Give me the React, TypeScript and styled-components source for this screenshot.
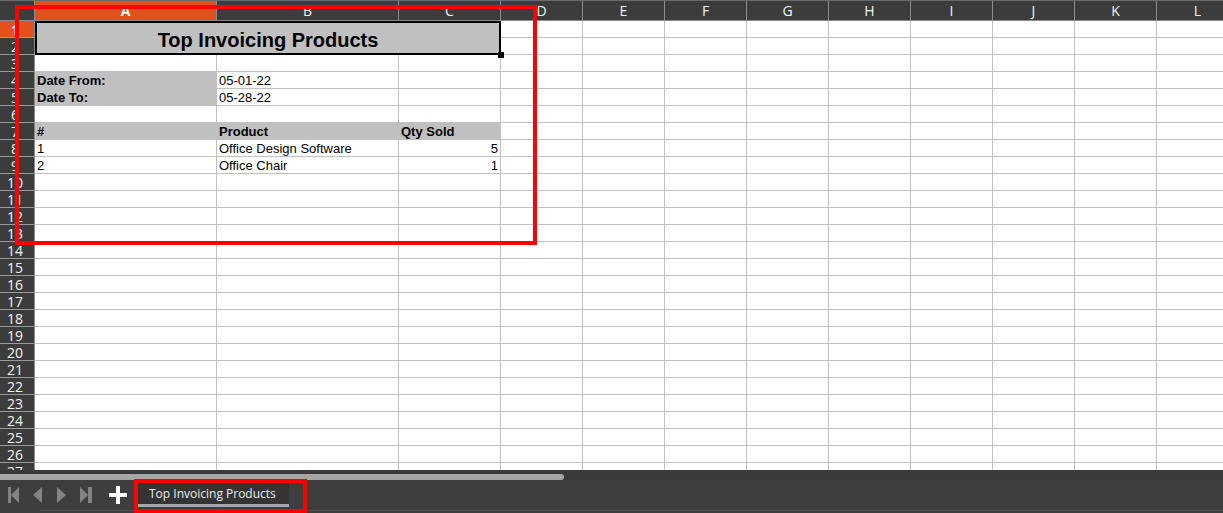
import React from 'react';
import styled, { createGlobalStyle } from 'styled-components';

const GlobalStyle = createGlobalStyle`
  html, body {
    margin: 0;
    padding: 0;
    background: #3c3c3c;
    overflow: hidden;
  }
  * { box-sizing: border-box; }
`;

const COLUMNS = ['A', 'B', 'C', 'D', 'E', 'F', 'G', 'H', 'I', 'J', 'K', 'L'];
const COL_WIDTHS = [182, 182, 102, 82, 82, 82, 82, 82, 82, 82, 82, 82];
const ROW_COUNT = 27;

type CellData = { text: string; bold?: boolean; fill?: boolean; align?: 'left' | 'right' };

const DATA: Record<string, CellData> = {
  A4: { text: 'Date From:', bold: true, fill: true },
  B4: { text: '05-01-22' },
  A5: { text: 'Date To:', bold: true, fill: true },
  B5: { text: '05-28-22' },
  A7: { text: '#', bold: true, fill: true },
  B7: { text: 'Product', bold: true, fill: true },
  C7: { text: 'Qty Sold', bold: true, fill: true },
  A8: { text: '1' },
  B8: { text: 'Office Design Software' },
  C8: { text: '5', align: 'right' },
  A9: { text: '2' },
  B9: { text: 'Office Chair' },
  C9: { text: '1', align: 'right' },
};

const Window = styled.div`
  width: 1223px;
  height: 513px;
  display: flex;
  flex-direction: column;
  background: #3c3c3c;
  position: relative;
  overflow: hidden;
`;

const SheetArea = styled.div`
  height: 470px;
  overflow: hidden;
  background: #ffffff;
`;

const Grid = styled.div`
  display: grid;
  grid-template-columns: 35px ${COL_WIDTHS.map((w) => `${w}px`).join(' ')};
  grid-template-rows: 21px repeat(${ROW_COUNT}, 17px);
`;

const Corner = styled.div`
  background: #3c3c3c;
  border-right: 1px solid #8c8c8c;
  border-bottom: 1px solid #8c8c8c;
  border-top: 1px solid #6a6a6a;
`;

const ColHeader = styled.div<{ $active?: boolean }>`
  background: ${({ $active }) => ($active ? '#e2501c' : '#3c3c3c')};
  color: #f4f4f4;
  border-top: 1px solid #6a6a6a;
  border-right: 1px solid #8c8c8c;
  border-bottom: 1px solid #8c8c8c;
  font-family: 'Open Sans', 'Noto Sans', sans-serif;
  font-size: 14px;
  font-weight: ${({ $active }) => ($active ? 700 : 400)};
  line-height: 19px;
  text-align: center;
`;

const RowHeader = styled.div<{ $active?: boolean }>`
  background: ${({ $active }) => ($active ? '#e2501c' : '#3c3c3c')};
  color: #f4f4f4;
  border-right: 1px solid #8c8c8c;
  border-bottom: 1px solid #9a9a9a;
  font-family: 'Open Sans', 'Noto Sans', sans-serif;
  font-size: 14px;
  font-weight: ${({ $active }) => ($active ? 700 : 400)};
  line-height: 17px;
  text-align: center;
  padding-right: 4px;
`;

const Cell = styled.div<{ $bold?: boolean; $fill?: boolean; $align?: 'left' | 'right' }>`
  background: ${({ $fill }) => ($fill ? '#c0c0c0' : '#ffffff')};
  border-right: 1px solid #c0c0c0;
  border-bottom: 1px solid #c0c0c0;
  font-family: 'Liberation Sans', Arial, sans-serif;
  font-size: 13px;
  font-weight: ${({ $bold }) => ($bold ? 700 : 400)};
  line-height: 16px;
  color: #000000;
  padding: 1px 2px 0;
  text-align: ${({ $align }) => $align ?? 'left'};
  white-space: nowrap;
`;

const TitleCell = styled.div`
  grid-column: 2 / 5;
  grid-row: 2 / 4;
  position: relative;
  background: #c0c0c0;
  border: 2px solid #000000;
  display: flex;
  align-items: center;
  justify-content: center;
  font-family: 'Liberation Sans', Arial, sans-serif;
  font-size: 20px;
  font-weight: 700;
  color: #000000;
  padding-top: 5px;
`;

const FillHandle = styled.span`
  position: absolute;
  right: -5px;
  bottom: -5px;
  width: 6px;
  height: 6px;
  background: #000000;
`;

const ScrollStrip = styled.div`
  height: 10px;
  padding-top: 4px;
  background: #3a3a3a;
`;

const ScrollThumb = styled.div`
  width: 564px;
  height: 6px;
  background: #a6a6a6;
  border-radius: 0 3px 3px 0;
`;

const TabBar = styled.div`
  flex: 1;
  display: flex;
  align-items: flex-start;
  padding-top: 3px;
  background: #3e3e3e;
  position: relative;

  &::after {
    content: '';
    position: absolute;
    left: 40px;
    right: 0;
    bottom: 2px;
    height: 1px;
    background: #4c4c4c;
  }
`;

const NavGroup = styled.div`
  display: flex;
  align-items: center;
  height: 24px;
  padding-left: 8px;
`;

const NavButton = styled.span`
  display: flex;
  width: 24px;
  height: 16px;
  align-items: center;
`;

const AddButton = styled.span`
  display: flex;
  width: 18px;
  height: 18px;
  margin-left: 5px;
  margin-top: 3px;
`;

const Tab = styled.div`
  margin-left: 10px;
  width: 152px;
  height: 24px;
  background: #343434;
  border-bottom: 3px solid #a8a8a8;
  color: #ececec;
  font-family: 'Open Sans', 'Noto Sans', sans-serif;
  font-size: 12px;
  line-height: 21px;
  padding-left: 12px;
  white-space: nowrap;
  position: relative;
  z-index: 1;
`;

const Annotation = styled.div<{ $left: number; $top: number; $w: number; $h: number }>`
  position: absolute;
  left: ${({ $left }) => $left}px;
  top: ${({ $top }) => $top}px;
  width: ${({ $w }) => $w}px;
  height: ${({ $h }) => $h}px;
  border: 4px solid #ff0000;
  pointer-events: none;
  z-index: 5;
`;

const NAV_GRAY = '#838383';

const FirstIcon = () => (
  <svg width="14" height="16" viewBox="0 0 14 16">
    <rect x="0" y="0" width="3" height="16" fill={NAV_GRAY} />
    <polygon points="11,0 11,16 3,8" fill={NAV_GRAY} />
  </svg>
);

const PrevIcon = () => (
  <svg width="12" height="16" viewBox="0 0 12 16">
    <polygon points="10,0 10,16 1,8" fill={NAV_GRAY} />
  </svg>
);

const NextIcon = () => (
  <svg width="12" height="16" viewBox="0 0 12 16">
    <polygon points="1,0 1,16 10,8" fill={NAV_GRAY} />
  </svg>
);

const LastIcon = () => (
  <svg width="14" height="16" viewBox="0 0 14 16">
    <polygon points="0,0 0,16 8,8" fill={NAV_GRAY} />
    <rect x="8" y="0" width="4" height="16" fill={NAV_GRAY} />
  </svg>
);

const PlusIcon = () => (
  <svg width="18" height="18" viewBox="0 0 18 18">
    <rect x="7" y="0" width="4" height="18" fill="#ffffff" />
    <rect x="0" y="7" width="18" height="4" fill="#ffffff" />
  </svg>
);

const App = () => {
  const rows = Array.from({ length: ROW_COUNT }, (_, i) => i + 1);

  return (
    <Window>
      <GlobalStyle />
      <SheetArea>
        <Grid>
          <Corner />
          {COLUMNS.map((c) => (
            <ColHeader key={c} $active={c === 'A'}>
              {c}
            </ColHeader>
          ))}
          <TitleCell>
            Top Invoicing Products
            <FillHandle />
          </TitleCell>
          {rows.map((r) => (
            <React.Fragment key={r}>
              <RowHeader $active={r === 1}>{r}</RowHeader>
              {COLUMNS.map((c, ci) => {
                if (r <= 2 && ci < 3) return null;
                const d = DATA[`${c}${r}`];
                return (
                  <Cell key={c} $bold={d?.bold} $fill={d?.fill} $align={d?.align}>
                    {d?.text}
                  </Cell>
                );
              })}
            </React.Fragment>
          ))}
        </Grid>
      </SheetArea>
      <ScrollStrip>
        <ScrollThumb />
      </ScrollStrip>
      <TabBar>
        <NavGroup>
          <NavButton><FirstIcon /></NavButton>
          <NavButton><PrevIcon /></NavButton>
          <NavButton><NextIcon /></NavButton>
          <NavButton><LastIcon /></NavButton>
        </NavGroup>
        <AddButton><PlusIcon /></AddButton>
        <Tab>Top Invoicing Products</Tab>
      </TabBar>
      <Annotation $left={15} $top={5} $w={522} $h={240} />
      <Annotation $left={134} $top={479} $w={173} $h={34} />
    </Window>
  );
};

export default App;
